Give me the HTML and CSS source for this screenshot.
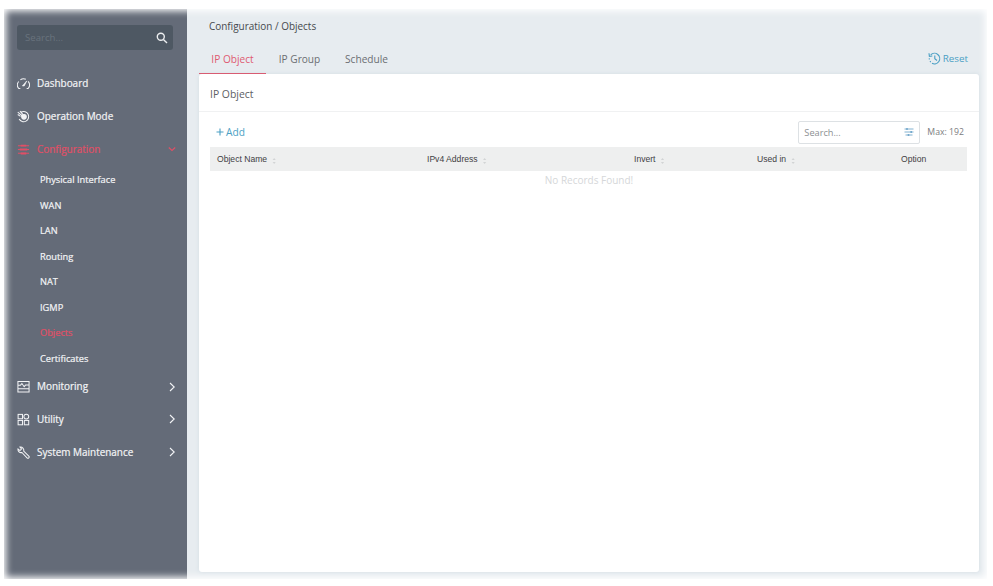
FILE: index.html
```html
<!DOCTYPE html>
<html lang="en">
<head>
<meta charset="utf-8">
<title>Configuration / Objects</title>
<link rel="stylesheet" href="styles.css">
</head>
<body>
<div class="app">
  <aside class="sidebar">
    <div class="side-search"><span>Search...</span>
      <svg width="12" height="12" viewBox="0 0 12 12"><circle cx="4.8" cy="4.8" r="3.5"/><path d="M7.4 7.4L11 11"/></svg>
    </div>
    <nav>
      <a class="item"><svg class="icon" viewBox="0 0 14 14"><path d="M3.6 12.4H1.9A6 6 0 0 1 1.8 4.8M3.6 3.1A5.8 5.8 0 0 1 9.5 2.4M11.9 4.8A5.8 5.8 0 0 1 12 12.4H10.4"/><path d="M5.8 9.6L10.5 4.2L7.8 9.6Z" fill="currentColor" stroke-width=".7"/></svg><span>Dashboard</span></a>
      <a class="item"><svg class="icon" viewBox="0 0 14 14"><path d="M4.6 2.2A5.5 5.5 0 1 1 2.3 9.8M.8 2.3L6.5 7M.8 4.8L3.8 6.8M3.2 1.2L6.5 5"/><circle cx="7.5" cy="7.4" r="2.5" fill="currentColor"/></svg><span>Operation Mode</span></a>
      <a class="item open active"><svg class="icon" viewBox="0 0 14 14"><path d="M1 3H13M1 7H13M1 11H13"/><path d="M4 2.8H10M3 7H11M4 11.2H10" stroke-width="2.1"/></svg><span>Configuration</span><svg class="chev" viewBox="0 0 8 10"><path d="M.8 3.5L4 6.5L7.2 3.5"/></svg></a>
      <div class="sub">
        <a>Physical Interface</a>
        <a>WAN</a>
        <a>LAN</a>
        <a>Routing</a>
        <a>NAT</a>
        <a>IGMP</a>
        <a class="active">Objects</a>
        <a>Certificates</a>
      </div>
      <a class="item"><svg class="icon" viewBox="0 0 14 14"><path d="M1 1.5H13V9.3H1ZM1 9.3V12.8H13V9.3M1 5.6H3.8L5.3 3.8L7.7 7.2L9.2 5.5H13"/></svg><span>Monitoring</span><svg class="chev" viewBox="0 0 8 10"><path d="M2 1L6.2 5L2 9"/></svg></a>
      <a class="item"><svg class="icon" viewBox="0 0 14 14"><rect x="1.2" y="1.5" width="4.7" height="4.7"/><circle cx="10" cy="3.9" r="2.6"/><rect x="1.2" y="8" width="4.7" height="4.7"/><rect x="7.9" y="8" width="4.7" height="4.7"/></svg><span>Utility</span><svg class="chev" viewBox="0 0 8 10"><path d="M2 1L6.2 5L2 9"/></svg></a>
      <a class="item"><svg class="icon" viewBox="0 0 14 14"><path d="M3.2 1.2A3.4 3.4 0 0 1 7.2 5.4L12.7 10.8A1.3 1.3 0 0 1 10.8 12.7L5.3 7A3.4 3.4 0 0 1 1.1 3.1L3.2 4.9L4.9 3.2Z"/></svg><span>System Maintenance</span><svg class="chev" viewBox="0 0 8 10"><path d="M2 1L6.2 5L2 9"/></svg></a>
    </nav>
  </aside>
  <main class="main">
    <div class="crumb">Configuration / Objects</div>
    <div class="tabs">
      <a class="tab active">IP Object</a><a class="tab">IP Group</a><a class="tab">Schedule</a>
      <a class="reset"><svg width="13" height="13" viewBox="0 0 13 13"><path d="M2.7 2.8A5.3 5.3 0 1 1 4 11.3M1 1.3L1.4 4.3L4.3 4M1.3 6.2V7.4M2 9.2L2.7 10.1M6.8 3.6V6.8L9 8.5"/></svg>Reset</a>
    </div>
    <section class="card">
      <h1>IP Object</h1>
      <div class="toolbar">
        <a class="add"><svg width="8" height="8" viewBox="0 0 8 8"><path d="M4 .5V7.5M.5 4H7.5"/></svg>Add</a>
        <div class="search"><span>Search...</span><svg width="10" height="10" viewBox="0 0 10 10"><path d="M.5 2H9.5M.5 5H9.5M1.5 8H8.5"/><path d="M3 1V3M7.2 4V6M4.5 7V9" stroke-width="1.6"/></svg></div>
        <span class="max">Max: 192</span>
      </div>
      <div class="thead">
        <span>Object Name<i></i></span><span>IPv4 Address<i></i></span><span>Invert<i></i></span><span>Used in<i></i></span><span>Option</span>
      </div>
      <div class="empty">No Records Found!</div>
    </section>
  </main>
</div>
</body>
</html>
```
FILE: styles.css
```css
* { box-sizing: border-box; }
body { margin: 0; height: 586px; overflow: hidden; background: #fff; font-family: "Open Sans", "Noto Sans", sans-serif; padding: 9px 6px 7px 4px; }
svg { fill: none; stroke: currentColor; stroke-width: 1.1; flex: none; }
.app { position: relative; display: flex; height: 570px; background: #e7ecf0; }
/* feathered white edge around the whole window */
.app::after { content: ""; position: absolute; z-index: 2; inset: -2px; box-shadow: inset 0 0 7px 4px #fff; pointer-events: none; }
.sidebar { width: 183px; background: #646b78; color: #f3f4f6; padding: 16px 14px 0 13px; }
.side-search { height: 25px; border-radius: 3px; background: #4e5863; display: flex; align-items: center; justify-content: space-between; padding: 0 5px 0 8px; font-size: 9.6px; color: #69737d; }
.side-search svg { color: #eceef0; stroke-width: 1.4; }
nav { padding-top: 17px; }
.item { display: flex; align-items: center; height: 32.8px; font-size: 9.95px; white-space: nowrap; -webkit-text-stroke: .2px; }
.item.open { padding-top: 1px; }
.item .icon { width: 13px; height: 13px; margin-right: 7px; }
.item > span { margin-top: -1px; }
.chev { width: 8px; height: 10px; margin-left: auto; margin-right: -3px; }
.active { color: #e04f66; }
.sub { display: flex; flex-direction: column; padding: 1.7px 0 0 23px; height: 206px; margin-bottom: -1.2px; }
.sub a { height: 25.55px; line-height: 25px; font-size: 9.25px; -webkit-text-stroke: .2px; }
.main { flex: 1; padding: 9px 8px 7px 12px; display: flex; flex-direction: column; }
.crumb { height: 18px; line-height: 17px; padding-left: 10px; font-size: 9.95px; color: #46494d; }
.tabs { position: relative; z-index: 1; display: flex; height: 38px; padding-top: 7px; font-size: 10.15px; line-height: 31px; color: #6b6e72; }
.tab { width: 67px; text-align: center; height: 31px; line-height: 33px; }
.tab.active { color: #df5a70; border-bottom: 1.5px solid #d85c72; }
.reset { margin-left: auto; margin-right: 11px; display: flex; align-items: center; gap: 2px; color: #4a9fc4; font-size: 9.8px; }
.card { flex: 1; background: #fff; border-radius: 3px; box-shadow: 0 0 4px #d3dde2; }
h1 { margin: 0; height: 38px; line-height: 40px; padding-left: 11px; font-size: 10.4px; font-weight: 400; color: #5d6064; border-bottom: 1px solid #f0f1f2; }
.toolbar { display: flex; align-items: center; height: 35px; padding: 5px 15px 0 17px; }
.add { display: flex; align-items: center; gap: 2px; color: #4a9fc4; font-size: 10.2px; }
.search { margin-left: auto; width: 122px; height: 23px; border: 1px solid #dde1e4; border-radius: 2px; display: flex; align-items: center; justify-content: space-between; padding: 0 5px; font-size: 9.2px; color: #8c8f92; }
.search svg { color: #75a9cc; stroke-width: .9; }
.max { margin-left: 7px; font-size: 8.7px; color: #7b7d80; white-space: nowrap; }
.thead { margin: 0 12px 0 11px; height: 24px; background: #eeefef; display: grid; grid-template-columns: 210px 207px 123px 144px 1fr; padding-left: 7px; align-items: center; font: 8.6px "Liberation Sans", sans-serif; color: #3f4143; }
.thead span { white-space: nowrap; }
.thead i { display: inline-block; width: 4px; height: 6px; margin-left: 5px; vertical-align: -2px; background: linear-gradient(#d2d4d5 0 2px, transparent 2px 4px, #d2d4d5 4px); clip-path: polygon(50% 0, 100% 40%, 100% 60%, 50% 100%, 0 60%, 0 40%); }
.empty { text-align: center; font-size: 10px; line-height: 19px; color: #d5d7d9; }
```
